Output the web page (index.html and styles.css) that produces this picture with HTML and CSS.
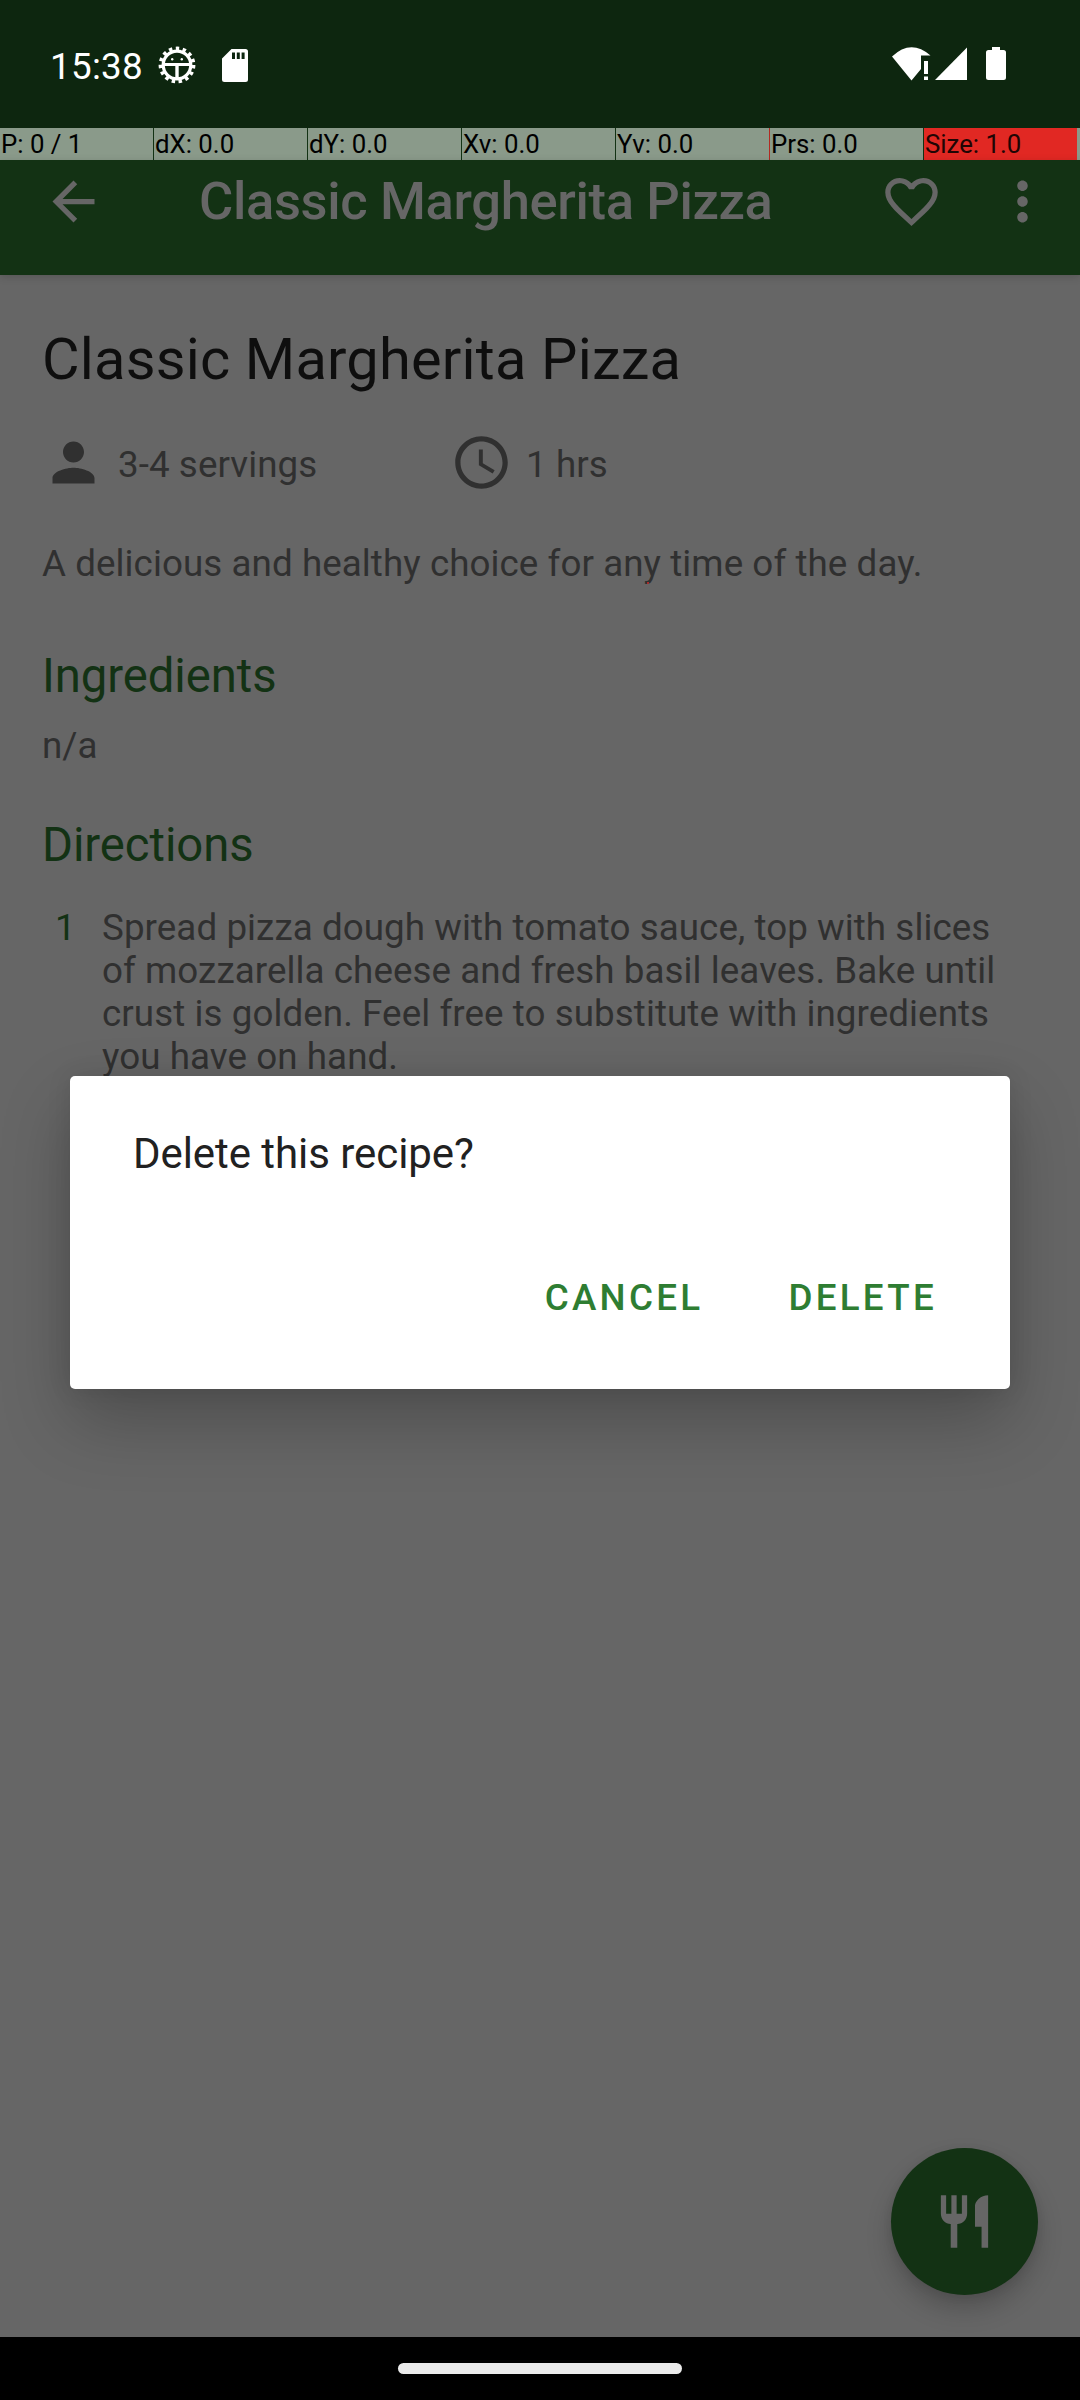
FILE: index.html
```html
<!DOCTYPE html>
<html lang="en">
<head>
<meta charset="utf-8">
<title>Classic Margherita Pizza</title>
<link rel="stylesheet" href="styles.css">
</head>
<body>
<div class="screen">
  <header class="status">
    <span class="clock">15:38</span>
    <svg class="gear" viewBox="0 0 38 38" width="38" height="38">
      <circle cx="19" cy="19" r="16.4" fill="none" stroke="#fff" stroke-width="4" stroke-dasharray="3.4 3.470"/>
      <circle cx="19" cy="19" r="13.8" fill="none" stroke="#fff" stroke-width="3.200"/>
      <path d="M6 18.500h26" stroke="#fff" stroke-width="3" fill="none"/>
      <path d="M19 19v13" stroke="#fff" stroke-width="3.400" fill="none"/>
      <circle cx="14.200" cy="13.300" r="1.200" fill="#fff"/><circle cx="23.800" cy="13.300" r="1.200" fill="#fff"/>
    </svg>
    <svg class="sd" viewBox="0 0 26 33" width="26" height="33">
      <path fill="#fff" fill-rule="evenodd" d="M9.500 0H23.500Q26 0 26 2.500V30.500Q26 33 23.500 33H2.500Q0 33 0 30.500V9.500ZM10 3.500V10h3V3.500ZM14.800 3.500V10h3V3.500ZM19.600 3.500V10h3V3.500Z"/>
    </svg>
    <svg class="signals" viewBox="0 0 116 36" width="116" height="36">
      <g fill="#fff">
        <path d="M0 9.500Q19-8.500 38.500 8.500H29V22L19.500 33.500Z"/>
        <path d="M32 14h4v13h-4zM32 29.500h4v3.500h-4z"/>
        <path d="M43 33L75 .5V33Z"/>
        <path d="M100 0h8v3h3.500q2.500 0 2.500 2.500V30.500q0 2.500-2.500 2.500H96.500q-2.500 0-2.500-2.500V5.500Q94 3 96.500 3H100Z"/>
      </g>
    </svg>
  </header>
  <div class="pointer-bar">
    <span>P: 0 / 1</span><span>dX: 0.0</span><span>dY: 0.0</span><span>Xv: 0.0</span><span class="before-hot">Yv: 0.0</span><span>Prs: 0.0</span><span class="hot">Size: 1.0</span>
  </div>
  <div class="toolbar">
    <svg class="icon" viewBox="0 0 24 24"><path d="M20 11H7.830l5.590-5.590L12 4l-8 8 8 8 1.410-1.410L7.830 13H20v-2z"/></svg>
    <h1 class="bar-title">Classic Margherita Pizza</h1>
    <svg class="icon heart" viewBox="0 0 24 24"><path d="M16.500 3c-1.740 0-3.410.81-4.500 2.090C10.910 3.810 9.240 3 7.500 3 4.420 3 2 5.420 2 8.500c0 3.780 3.400 6.860 8.550 11.540L12 21.350l1.450-1.320C18.600 15.360 22 12.280 22 8.500 22 5.420 19.580 3 16.500 3zm-4.400 15.550l-.1.100-.1-.1C7.140 14.240 4 11.390 4 8.500 4 6.500 5.500 5 7.500 5c1.540 0 3.040.99 3.570 2.360h1.870C13.460 5.990 14.960 5 16.500 5c2 0 3.500 1.500 3.500 3.500 0 2.890-3.140 5.740-7.900 10.050z"/></svg>
    <svg class="icon more" viewBox="0 0 24 24"><path d="M12 8c1.100 0 2-.9 2-2s-.9-2-2-2-2 .9-2 2 .9 2 2 2zm0 2c-1.100 0-2 .9-2 2s.9 2 2 2 2-.9 2-2-.9-2-2-2zm0 6c-1.100 0-2 .9-2 2s.9 2 2 2 2-.9 2-2-.9-2-2-2z"/></svg>
  </div>
  <main class="content">
    <h2 class="recipe">Classic Margherita Pizza</h2>
    <div class="meta">
      <div class="meta-item"><svg class="icon" viewBox="0 0 24 24"><path d="M12 12c2.210 0 4-1.790 4-4s-1.790-4-4-4-4 1.790-4 4 1.790 4 4 4zm0 2c-2.670 0-8 1.340-8 4v2h16v-2c0-2.660-5.330-4-8-4z"/></svg><span>3-4 servings</span></div>
      <div class="meta-item"><svg class="icon" viewBox="0 0 24 24"><path d="M11.990 2C6.470 2 2 6.480 2 12s4.470 10 9.990 10C17.520 22 22 17.520 22 12S17.520 2 11.990 2zM12 20c-4.420 0-8-3.580-8-8s3.580-8 8-8 8 3.580 8 8-3.580 8-8 8zm.5-13H11v6l5.250 3.150.75-1.230-4.500-2.670z"/></svg><span>1 hrs</span></div>
    </div>
    <p class="desc">A delicious and healthy choice for any time of the day.</p>
    <h3 class="section">Ingredients</h3>
    <p class="none">n/a</p>
    <h3 class="section">Directions</h3>
    <div class="step">
      <span class="num">1</span>
      <p class="step-text">Spread pizza dough with tomato sauce, top with slices<br>of mozzarella cheese and fresh basil leaves. Bake until<br>crust is golden. Feel free to substitute with ingredients<br>you have on hand.</p>
    </div>
  </main>
  <footer class="nav"><span class="pill"></span></footer>
  <span class="touch-dot"></span>
  <div class="fab"><svg class="icon" viewBox="0 0 24 24"><path d="M11 9H9V2H7v7H5V2H3v7c0 2.120 1.660 3.840 3.750 3.970V22h2.500v-9.030C11.340 12.840 13 11.120 13 9V2h-2v7zm5-3v8h2.500v8H21V2c-2.760 0-5 2.240-5 4z"/></svg></div>
  <div class="dialog">
    <p class="question">Delete this recipe?</p>
    <div class="actions"><span>CANCEL</span><span>DELETE</span></div>
  </div>
</div>
</body>
</html>
```
FILE: styles.css
```css
* { box-sizing: border-box; margin: 0; padding: 0; }
body { background: #666; font-family: Roboto, sans-serif; }
.screen {
  position: relative;
  display: flex;
  flex-direction: column;
  width: 1080px;
  height: 2400px;
  overflow: hidden;
  background: #666;
  color: #303030;
  font-size: 36.75px;
  line-height: 43px;
  white-space: nowrap;
}
.icon { width: 63px; height: 63px; flex: none; fill: currentColor; }

.status {
  display: flex;
  align-items: flex-start;
  height: 128px;
  padding: 45px 72px 0 50px;
  background: #0d260f;
  color: #fff;
}
.clock { width: 108px; letter-spacing: .3px; }
.gear { margin-top: 1px; }
.sd { margin: 4px 0 0 26px; }
.signals { margin: 2px 0 0 auto; }

.pointer-bar {
  display: flex;
  gap: 1px;
  height: 32px;
  background: linear-gradient(90deg, #133214 1077px, #8a9a8a 1077px);
  color: #000;
  font-size: 25.8px;
  line-height: 32px;
}
.pointer-bar span { width: 153px; padding-left: 1px; background: #8a9a8a; }
.pointer-bar .before-hot { box-shadow: 1px 0 #b32a22; }
.pointer-bar .hot { background: #e12823; color: #200504; }

.toolbar {
  display: flex;
  align-items: center;
  height: 115px;
  padding: 0 26px 32px 42px;
  background: #133214;
  color: #666;
  box-shadow: 0 2px 8px rgba(0, 0, 0, .16);
}
.bar-title { margin: 0 0 2px 94px; font-size: 52.5px; font-weight: 500; line-height: 62px; letter-spacing: -.35px; }
.heart { margin-left: auto; }
.more { margin-left: 48px; }

.content { flex: 1; padding: 50px 42px 0; letter-spacing: .07px; }
.recipe { color: #0e0e0e; font-size: 57.75px; font-weight: 400; line-height: 68px; letter-spacing: .2px; }
.meta { display: grid; grid-template-columns: 408px 1fr; margin-top: 38px; }
.meta-item { display: flex; align-items: center; gap: 13px; }
.meta-item span { padding-top: 3px; }
.desc { margin-top: 48px; }
.section { margin-top: 63px; color: #133214; font-size: 47.25px; font-weight: 400; line-height: 56px; letter-spacing: -.07px; }
.none { margin: 20px 0 -13px; }
.step { display: flex; margin-top: 33px; }
.num { width: 60px; padding-left: 13px; color: #133214; }

.nav { display: flex; justify-content: center; height: 63px; padding-top: 26px; background: #000; }
.pill { width: 284px; height: 11px; border-radius: 6px; background: #ebebeb; }

.touch-dot { position: absolute; left: 647px; top: 582px; width: 2px; height: 2px; background: #a82c2c; }

.fab {
  position: absolute;
  left: 891px;
  top: 2148px;
  display: flex;
  align-items: center;
  justify-content: center;
  width: 147px;
  height: 147px;
  border-radius: 50%;
  background: #133214;
  color: #666;
  box-shadow: 0 14px 26px rgba(0, 0, 0, .2), 0 2px 10px rgba(0, 0, 0, .08);
}

.dialog {
  position: absolute;
  left: 70px;
  top: 1076px;
  width: 940px;
  height: 313px;
  padding: 53px 73px 0 63px;
  border-radius: 5px;
  background: #fff;
  box-shadow: 0 32px 70px rgba(0, 0, 0, .24), 0 0 24px rgba(0, 0, 0, .1);
}
.question { color: #212121; font-size: 42px; line-height: 49px; letter-spacing: -.06px; }
.actions {
  display: flex;
  justify-content: flex-end;
  gap: 85px;
  margin-top: 98px;
  color: #2e7d32;
  font-weight: 500;
  letter-spacing: .0893em;
}
```
